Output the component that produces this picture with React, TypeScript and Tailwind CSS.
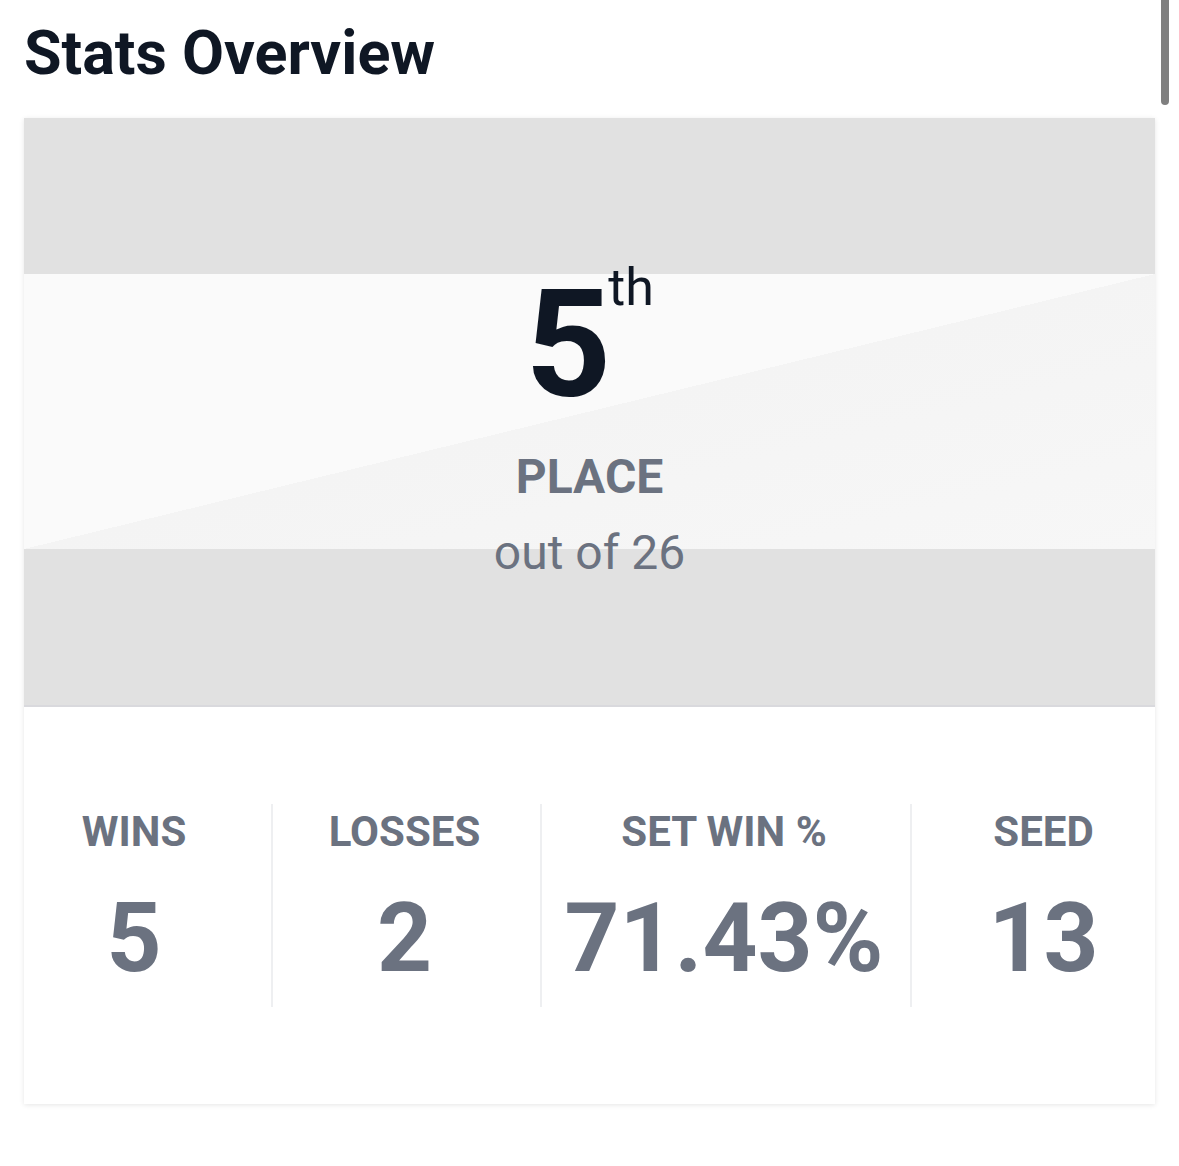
import React from "react";

const stats = [
  { label: "WINS", value: "5", col: "w-[247px] pr-[27px]" },
  { label: "LOSSES", value: "2", col: "w-[269px] pr-[4px] border-l-2 border-[#eeeff1]" },
  { label: "SET WIN %", value: "71.43%", col: "w-[370px] pr-[4px] border-l-2 border-[#eeeff1]" },
  { label: "SEED", value: "13", col: "w-[245px] pl-[20px] border-l-2 border-[#eeeff1]" },
];

export default function App() {
  return (
    <div
      className="relative w-[1179px] h-[1166px] bg-white overflow-hidden"
      style={{ fontFamily: "Roboto, 'Liberation Sans', sans-serif" }}
    >
      {/* scrollbar overlay */}
      <div className="absolute right-[10px] top-0 w-[8px] h-[105px] rounded-b-full bg-[#7f7f7f]" />

      <div className="pt-[17px] pl-[24px]">
        <h1 className="text-[61px] leading-[72px] font-bold text-[#0f1724]">
          Stats Overview
        </h1>
      </div>

      <div className="mt-[29px] ml-[24px] w-[1131px] bg-white shadow-[0_1px_5px_rgba(0,0,0,0.10)]">
        {/* top placement section */}
        <div className="h-[589px] border-b-2 border-[#d9d9dd] bg-[#e1e1e1] [background:linear-gradient(to_bottom,#e1e1e1_156px,transparent_156px,transparent_431px,#e1e1e1_431px),linear-gradient(to_bottom_right,#fafafa_50%,#f4f4f4_50%,#f7f7f7_100%)_0_156px/100%_275px_no-repeat,#e1e1e1]">
          <div className="flex flex-col items-center pt-[152px]">
            <div className="flex items-start leading-none">
              <span className="text-[150px] leading-[150px] font-bold text-[#0f1724]">5</span>
              <span className="text-[52px] leading-none font-normal text-[#0f1724] -ml-[3px] -mt-[8px]">th</span>
            </div>
            <div className="mt-[29px] text-[48px] leading-[55px] font-bold text-[#6b7280]">PLACE</div>
            <div className="mt-[22px] text-[48px] leading-[54px] font-normal text-[#6b7280]">out of 26</div>
          </div>
        </div>

        {/* stats row */}
        <div className="flex py-[97px]">
          {stats.map((s) => (
            <div key={s.label} className={`h-[203px] flex flex-col items-center ${s.col}`}>
              <div className="mt-[3px] text-[42px] leading-[50px] font-bold text-[#6b7280]">{s.label}</div>
              <div className="mt-[33px] text-[96px] leading-[96px] font-bold text-[#6b7280]">{s.value}</div>
            </div>
          ))}
        </div>
      </div>
    </div>
  );
}
